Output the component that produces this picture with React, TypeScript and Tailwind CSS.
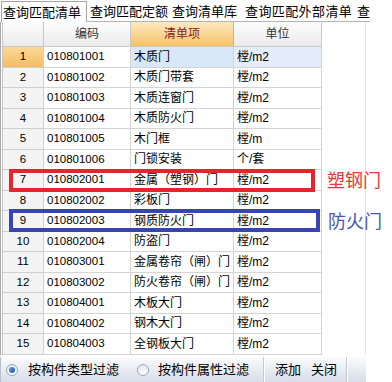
import React from "react";

const rows = [
  { id: 1, code: "010801001", name: "木质门", unit: "樘/m2" },
  { id: 2, code: "010801002", name: "木质门带套", unit: "樘/m2" },
  { id: 3, code: "010801003", name: "木质连窗门", unit: "樘/m2" },
  { id: 4, code: "010801004", name: "木质防火门", unit: "樘/m2" },
  { id: 5, code: "010801005", name: "木门框", unit: "樘/m" },
  { id: 6, code: "010801006", name: "门锁安装", unit: "个/套" },
  { id: 7, code: "010802001", name: "金属（塑钢）门", unit: "樘/m2" },
  { id: 8, code: "010802002", name: "彩板门", unit: "樘/m2" },
  { id: 9, code: "010802003", name: "钢质防火门", unit: "樘/m2" },
  { id: 10, code: "010802004", name: "防盗门", unit: "樘/m2" },
  { id: 11, code: "010803001", name: "金属卷帘（闸）门", unit: "樘/m2" },
  { id: 12, code: "010803002", name: "防火卷帘（闸）门", unit: "樘/m2" },
  { id: 13, code: "010804001", name: "木板大门", unit: "樘/m2" },
  { id: 14, code: "010804002", name: "钢木大门", unit: "樘/m2" },
  { id: 15, code: "010804003", name: "全钢板大门", unit: "樘/m2" },
];

const font = "font-['Liberation_Sans','Noto_Sans_CJK_SC',sans-serif]";

function Radio({ checked }: { checked?: boolean }) {
  return (
    <span className="w-[12px] h-[12px] rounded-full border border-[#9aa6b6] bg-gradient-to-b from-[#e4e8ee] to-[#ffffff] flex items-center justify-center">
      {checked && (
        <span className="w-[6px] h-[6px] rounded-full bg-gradient-to-br from-[#6fa0e8] to-[#1f4fa8]" />
      )}
    </span>
  );
}

function App() {
  return (
    <div className={`relative w-[392px] h-[382px] bg-white overflow-hidden text-black ${font}`}>
      {/* tabs */}
      <div className="w-[370px] h-[22px] flex items-end whitespace-nowrap text-[13px] leading-none">
        <div className="ml-[1px] w-[87px] h-[21px] border border-b-0 border-[#a4a4a4] flex items-center pl-[1px] bg-white">
          查询匹配清单
        </div>
        <div className="flex-1 h-[21px] flex items-center border-b border-[#b4b4b4]">
          <span className="ml-[3px] w-[82px]">查询匹配定额</span>
          <span className="w-[73px]">查询清单库</span>
          <span className="w-[112px] tracking-[0.4px]">查询匹配外部清单</span>
          <span>查</span>
        </div>
      </div>

      {/* grid panel */}
      <div className="w-[366px] h-[333px] border-l border-[#a8a8a8] pl-[1px] border-r border-r-[#e4e4e4]">
        <div className="w-[320px] border-l border-[#c4c4c4]">
          {/* header */}
          <div className="flex h-[25px] text-[12px] border-b border-[#c8c8c8]">
            <div className="w-[41px] border-r border-[#c8c8c8] bg-gradient-to-b from-[#fdfdfd] to-[#ebebeb]" />
            <div className="w-[87px] border-r border-[#c8c8c8] bg-gradient-to-b from-[#fdfdfd] to-[#ebebeb] flex items-center justify-center text-[#333]">
              编码
            </div>
            <div className="w-[103px] border-r border-[#d9b070] bg-gradient-to-b from-[#fde9c0] to-[#f6c266] flex items-center justify-center text-[#8a1c1c]">
              清单项
            </div>
            <div className="w-[88px] border-r border-[#c8c8c8] bg-gradient-to-b from-[#fdfdfd] to-[#ebebeb] flex items-center justify-center text-[#333]">
              单位
            </div>
          </div>
          {/* rows */}
          {rows.map((r) => {
            const sel = r.id === 1;
            return (
              <div key={r.id} className="flex h-[20.5px] text-[12px] leading-none">
                <div
                  className={`w-[41px] border-r border-b border-[#cfcfcf] flex items-center justify-center text-[11.5px] ${
                    sel ? "bg-gradient-to-b from-[#fbd998] to-[#f4bd62]" : "bg-[#f4f4f4]"
                  }`}
                >
                  {r.id}
                </div>
                <div className="w-[87px] border-r border-b border-[#d4d4d4] flex items-center pl-[3px] text-[11.5px]">
                  {r.code}
                </div>
                <div
                  className={`w-[103px] border-r border-b border-[#d4d4d4] flex items-center pl-[3px] whitespace-nowrap overflow-hidden ${
                    sel ? "bg-[#d9e8f9]" : ""
                  }`}
                >
                  {r.name}
                </div>
                <div
                  className={`w-[88px] border-r border-b border-[#d4d4d4] flex items-center pl-[3px] ${
                    sel ? "bg-[#e4eefa]" : ""
                  }`}
                >
                  {r.unit}
                </div>
              </div>
            );
          })}
        </div>
      </div>

      {/* bottom bar */}
      <div className="mt-[2px] w-[366px] h-[25px] flex items-center border-l border-[#b8c0cc] bg-gradient-to-b from-[#fbfcfd] to-[#d6dde8] text-[13px] leading-none whitespace-nowrap">
        <div className="ml-[5px]">
          <Radio checked />
        </div>
        <span className="ml-[10px]">按构件类型过滤</span>
        <div className="ml-[18px]">
          <Radio />
        </div>
        <span className="ml-[9px]">按构件属性过滤</span>
        <div className="ml-[14px] h-full border-l border-[#c2cad6] border-r border-r-white" />
        <span className="ml-[10px]">添加</span>
        <span className="ml-[10px]">关闭</span>
        <div className="ml-[9px] h-full border-l border-[#c2cad6] border-r border-r-white" />
      </div>

      {/* annotations */}
      <div className="absolute left-[9px] top-[169px] w-[306px] h-[23px] border-[4px] border-[#e8232b]" />
      <div className="absolute left-[9px] top-[209px] w-[311px] h-[23px] border-[4px] border-[#3944b4]" />
      <div className="absolute left-[327px] top-[170px] text-[18px] leading-[22px] text-[#e8363a] whitespace-nowrap">
        塑钢门
      </div>
      <div className="absolute left-[328px] top-[211px] text-[18px] leading-[22px] text-[#4a56b6] whitespace-nowrap">
        防火门
      </div>
    </div>
  );
}

export default App;
